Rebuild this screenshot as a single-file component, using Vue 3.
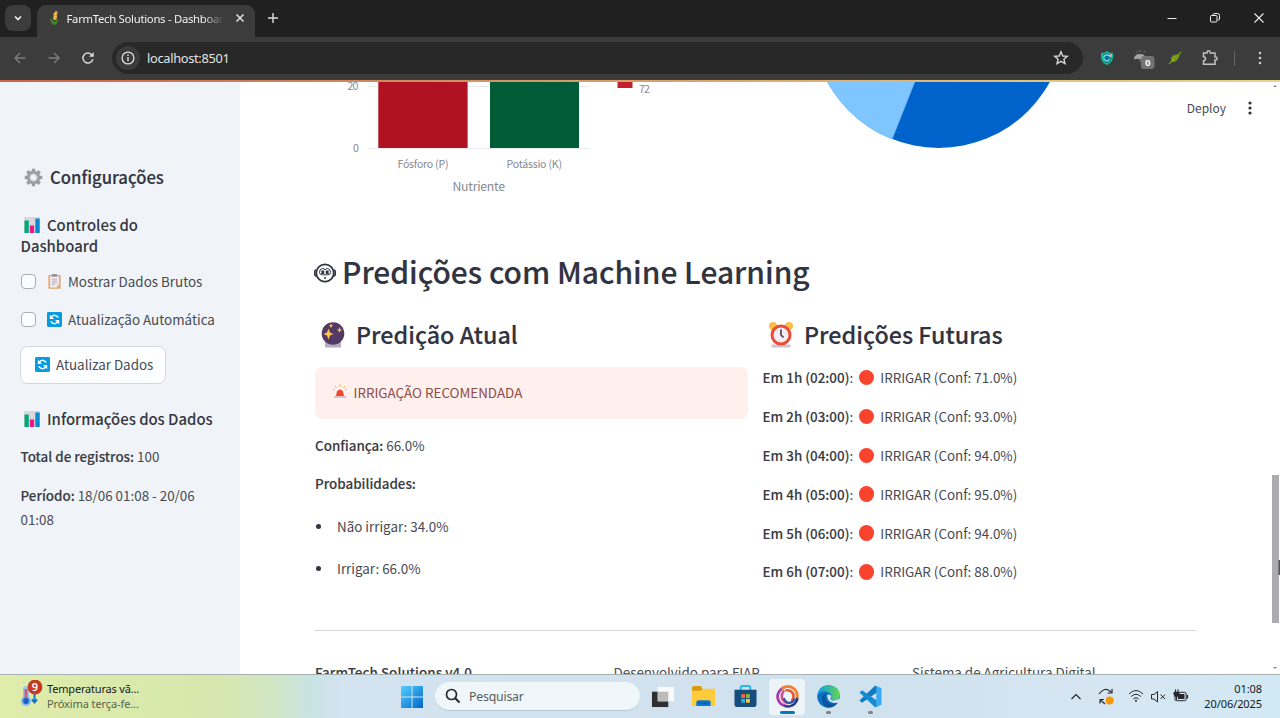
<script setup>
const predictions = [
  ['Em 1h (02:00)', '71.0%'],
  ['Em 2h (03:00)', '93.0%'],
  ['Em 3h (04:00)', '94.0%'],
  ['Em 4h (05:00)', '95.0%'],
  ['Em 5h (06:00)', '94.0%'],
  ['Em 6h (07:00)', '88.0%']
]
</script>

<template>
  <div class="screen">
    <header class="chrome">
      <div class="tabs">
        <div class="tabmenu"><svg width="10" height="10" viewBox="0 0 10 10"><path d="M2 3.5 5 6.5 8 3.5" fill="none" stroke="#eee" stroke-width="1.7" /></svg></div>
        <div class="tab">
          <svg class="fav" width="14" height="16" viewBox="0 0 14 16"><path d="M2.5 8Q2 14 7 15Q10 13 10 9Q8 10 7 12Q5 11 2.5 8Z" fill="#3f8a22" /><path d="M6 10Q4 8 6 6Q4 4 6.5 3Q7 0 9.5 1.5Q10 4 8.5 5Q10 7 8 10Z" fill="#e5a93a" /><path d="M6 4 8 3M6 7 8.5 6" stroke="#f4d27a" /></svg>
          <span class="tabtitle">FarmTech Solutions - Dashboard</span>
          <svg class="x" width="10" height="10" viewBox="0 0 10 10"><path d="M1.5 1.5 8.5 8.5M8.5 1.5 1.5 8.5" stroke="#e4e4e4" stroke-width="1.5" /></svg>
        </div>
        <svg class="plus" width="12" height="12" viewBox="0 0 12 12"><path d="M6 1V11M1 6H11" stroke="#ddd" stroke-width="1.4" /></svg>
        <div class="wincontrols">
          <svg width="10" height="12" viewBox="0 0 10 12"><path d="M.5 6.5H9.5" stroke="#eee" /></svg>
          <svg width="12" height="12" viewBox="0 0 12 12" fill="none" stroke="#eee"><rect x="1.5" y="3.5" width="6.5" height="6.5" rx="1" /><path d="M4 3.5V3Q4 1.5 5.5 1.5H8.5Q10.5 1.5 10.5 3.5V7Q10.5 8 9 8" /></svg>
          <svg width="12" height="12" viewBox="0 0 12 12"><path d="M1.5 1.5 10.5 10.5M10.5 1.5 1.5 10.5" stroke="#eee" stroke-width="1.1" /></svg>
        </div>
      </div>
      <div class="toolbar">
        <svg class="nav1" width="14" height="14" viewBox="0 0 14 14" fill="none" stroke="#7c7c7c" stroke-width="1.4"><path d="M12.5 7H2M7 2 2 7 7 12" /></svg>
        <svg class="nav2" width="14" height="14" viewBox="0 0 14 14" fill="none" stroke="#7c7c7c" stroke-width="1.4"><path d="M1.5 7H12M7 2 12 7 7 12" /></svg>
        <svg class="nav3" width="14" height="14" viewBox="0 0 14 14"><path d="M11.8 8.2A5 5 0 1 1 11 4.1L12 5.3" fill="none" stroke="#d4d4d4" stroke-width="1.5" /><path d="M12.7 1V5.7H8Z" fill="#d4d4d4" /></svg>
        <div class="address">
          <span class="info"><svg width="14" height="14" viewBox="0 0 14 14"><circle cx="7" cy="7" r="5.9" fill="none" stroke="#ddd" stroke-width="1.3" /><path d="M7 6V10.2M7 3.6V5" stroke="#ddd" stroke-width="1.4" /></svg></span>
          <span class="url">localhost:8501</span>
          <svg class="star" width="16" height="16" viewBox="0 0 16 16"><path d="M8 1.8 9.8 6 14.3 6.3 10.9 9.2 12 13.6 8 11.3 4 13.6 5.1 9.2 1.7 6.3 6.2 6Z" fill="none" stroke="#d5d5d5" stroke-width="1.4" /></svg>
        </div>
        <div class="exts">
          <svg width="14" height="16" viewBox="0 0 14 16"><path d="M1 3Q5 3 7 1Q9 3 13 3V8Q12 13 7 15Q2 13 1 8Z" fill="#13b99b" /><path d="M3 5 7 3.5 10 5M11 8Q10 12 7 13Q3 11 3 7" stroke="#0c665f" fill="none" /><path d="M9.5 9.2A3 3 0 1 1 9 5.8" fill="#0870a5" stroke="#77e8ed" stroke-width="1.2" /><circle cx="10.5" cy="5.5" r="1.5" fill="#d5b3a1" /></svg>
          <svg class="ext2" width="22" height="22" viewBox="0 0 22 22"><path d="M1 12.5Q1 7 7 7Q13 7 13 12.5Q10 11 7 12.5Q4 11 1 12.5Z" fill="#a5a5a5" /><path d="M4 5.5 3 4M7 5V3M10.5 5.5 12 4M7 13V15" stroke="#777" /><rect x="8" y="9" width="13.5" height="13" rx="3" fill="#737373" /><text x="14.7" y="19" text-anchor="middle" font-size="9.5" font-weight="700" fill="#fff">0</text></svg>
          <svg width="14" height="14" viewBox="0 0 14 14"><path d="M1 13 13 1" stroke="#6b9c0b" stroke-width="1.3" /><path d="M3 7 5 6 5 4.5 7 5 8 3.5 9.5 5 11 3.5 10.5 6.5 9 7.5 9.5 9 7.5 9 6.5 11 5 10 3 11 4 8.5Z" fill="#86a90c" stroke="#86a90c" stroke-width=".6" /><path d="M5.5 6 8.5 9M7.5 4.5 9.5 7" stroke="#4b7a11" stroke-width=".8" /></svg>
          <svg width="18" height="18" viewBox="0 0 18 18"><path d="M2.5 4H6V3.4A1.6 1.6 0 0 1 9.2 3.4V4H14V8H14.6A1.4 1.4 0 0 1 14.6 11H14V15.3H2.5V11.8A1.9 1.9 0 0 0 2.5 7.8Z" fill="none" stroke="#c1c1c1" stroke-width="1.5" /></svg>
          <i></i>
          <svg width="4" height="16" viewBox="0 0 4 16" fill="#ccc"><circle cx="2" cy="3" r="1.3" /><circle cx="2" cy="8" r="1.3" /><circle cx="2" cy="13" r="1.3" /></svg>
        </div>
      </div>
    </header>

    <div class="page">
      <aside>
        <h2><svg class="e20" viewBox="0 0 20 20"><g stroke="#9b9ba1" stroke-width="3.6"><path d="M10 .8V19.2M.8 10H19.2M3.5 3.5 16.5 16.5M16.5 3.5 3.5 16.5" /></g><circle cx="10" cy="10" r="5.5" fill="#f0f4f9" stroke="#9b9ba1" stroke-width="3" /><circle cx="10" cy="10" r="3.8" fill="#f0f4f9" stroke="#c1c0c7" stroke-width="1.2" /></svg><span>Configurações</span></h2>
        <h3 class="controls"><svg class="e16" viewBox="0 0 16 16"><rect width="16" height="16" rx="1" fill="#ddd6df" /><rect x=".5" y="3.5" width="4.3" height="12.5" fill="#00aa76" /><rect x="5.9" y="8.5" width="4.2" height="7.5" fill="#ec168c" /><rect x="11.3" y="1.5" width="4.4" height="14.5" fill="#0989d0" /></svg><span>Controles do</span><br><span>Dashboard</span></h3>
        <label class="check1"><span class="box"></span><svg class="e16" viewBox="0 0 16 16"><rect x="1.5" y="1" width="13" height="14.8" rx="1" fill="#e6a66d" /><path d="M3.3 2.5H12.7V12L10.5 14.3H3.3Z" fill="#f4eff2" /><path d="M12.7 12H10.5V14.3Z" fill="#b9b0bd" /><rect x="5" y="0" width="6" height="3" rx="1" fill="#99939c" /><path d="M5 5.5H11M5 7.5H11M5 9.5H11M5 11.5H8.5" stroke="#aaa3b0" stroke-width=".9" /></svg><span>Mostrar Dados Brutos</span></label>
        <label class="check2"><span class="box"></span><svg class="e16" viewBox="0 0 16 16"><rect width="16" height="16" rx="1.5" fill="#079ce0" /><path d="M4 6Q8 1 12 6M12 10Q8 15 4 10" fill="none" stroke="#fff" stroke-width="1.7" /><path d="M3 3V7.5H7.5ZM13 13V8.5H8.5Z" fill="#fff" /></svg><span>Atualização Automática</span></label>
        <button><svg class="e16" viewBox="0 0 16 16"><rect width="16" height="16" rx="1.5" fill="#079ce0" /><path d="M4 6Q8 1 12 6M12 10Q8 15 4 10" fill="none" stroke="#fff" stroke-width="1.7" /><path d="M3 3V7.5H7.5ZM13 13V8.5H8.5Z" fill="#fff" /></svg><span>Atualizar Dados</span></button>
        <h3 class="infohead"><svg class="e16" viewBox="0 0 16 16"><rect width="16" height="16" rx="1" fill="#ddd6df" /><rect x=".5" y="3.5" width="4.3" height="12.5" fill="#00aa76" /><rect x="5.9" y="8.5" width="4.2" height="7.5" fill="#ec168c" /><rect x="11.3" y="1.5" width="4.4" height="14.5" fill="#0989d0" /></svg><span>Informações dos Dados</span></h3>
        <p class="total"><b>Total de registros:</b> 100</p>
        <p class="period"><b>Período:</b> 18/06 01:08 - 20/06<br>01:08</p>
      </aside>

      <main>
        <svg class="charts" width="1032" height="120" viewBox="240 82 1032 120">
          <path d="M368 86.5H590M368 148.5H590" stroke="#e9ebef" />
          <rect x="378.3" y="82" width="89.3" height="66" fill="#b01222" />
          <rect x="490" y="82" width="89" height="66" fill="#005c37" />
          <rect x="617.5" y="82" width="15" height="6" fill="#c41f2d" />
          <g fill="#858992" font-size="10.6">
            <text x="347.5" y="90.3" textLength="11">20</text><text x="353" y="152" textLength="6">0</text>
            <text x="397.5" y="168" textLength="51">Fósforo (P)</text><text x="506.5" y="168" textLength="55.5">Potássio (K)</text>
            <text x="639" y="93" textLength="11">72</text>
            <text x="452.5" y="191.3" font-size="12.3" textLength="52.5">Nutriente</text>
          </g>
          <circle cx="938.7" cy="21.5" r="126.5" fill="#0063cc" />
          <path d="M938.7 21.5 892.2 139.1A126.5 126.5 0 0 1 811.9 21.5Z" fill="#7fc5ff" stroke="#7fc5ff" stroke-width=".4" />
        </svg>
        <h1><svg width="22" height="20" viewBox="0 0 22 20" fill="none" stroke="#31333f" stroke-width="1.7"><circle cx="11" cy="10" r="8.7" /><path d="M2 7Q.7 7 .7 10Q.7 13 2 13M20 7Q21.3 7 21.3 10Q21.3 13 20 13" /><path d="M5.5 9.5Q5.5 5.5 8.5 5.5Q10.5 5.5 11 7Q11.5 5.5 13.5 5.5Q16.5 5.5 16.5 9.5Q16.5 11.8 13.5 11.8H8.5Q5.5 11.8 5.5 9.5Z" stroke-width="1" /><path d="M8.8 7.5V11M13.2 7.5V11" stroke-width="2.8" /><path d="M10 15H12" /></svg><span>Predições com Machine Learning</span></h1>
        <div class="columns">
          <section class="current">
            <h2><svg width="26" height="28" viewBox="0 0 26 28"><path d="M5 20H21V26.5H5Z" fill="#b5aebc" /><circle cx="13" cy="12.5" r="11.3" fill="#533a65" /><path d="M8.5 7.5 10 11.5 13.5 13 10 14.5 8.5 18.5 7 14.5 3.5 13 7 11.5ZM19.5 6 20.3 8.2 22.3 9 20.3 9.8 19.5 12 18.7 9.8 16.7 9 18.7 8.2ZM11 2.5 11.8 4 13 4.8 11.8 5.5 11 7 10.2 5.5 9 4.8 10.2 4Z" fill="#ffc34b" /></svg><span>Predição Atual</span></h2>
            <div class="alert"><svg width="14" height="15" viewBox="0 0 14 15"><path d="M2.8 12.5 4 7.5Q7 3.5 10 7.5L11.2 12.5Z" fill="#f54632" /><rect x="1" y="12" width="12" height="2" fill="#d6c4cb" /><path d="M7 3V0M3.5 4 2 2M10.5 4 12 2M2 6 0 5M12 6 14 5" stroke="#f8bd59" stroke-width="1" /></svg><span>IRRIGAÇÃO RECOMENDADA</span></div>
            <p class="conf"><b>Confiança:</b> 66.0%</p>
            <p class="prob"><b>Probabilidades:</b></p>
            <ul><li>Não irrigar: 34.0%</li><li>Irrigar: 66.0%</li></ul>
          </section>
          <section class="future">
            <h2><svg width="26" height="28" viewBox="0 0 26 28"><rect x="3.5" y="23.5" width="19" height="3" rx="1" fill="#cbc5cd" /><circle cx="5" cy="5" r="4" fill="#fac04a" /><circle cx="21" cy="5" r="4" fill="#fac04a" /><circle cx="13" cy="14" r="9" fill="#f2edf3" stroke="#e94c37" stroke-width="3" /><path d="M13 8.5V14L15.5 16.5" fill="none" stroke="#42394a" stroke-width="1.6" /></svg><span>Predições Futuras</span></h2>
            <p v-for="p in predictions" :key="p[0]"><span class="time"><b>{{ p[0] }}</b>:</span><i></i><span class="result">IRRIGAR (Conf: {{ p[1] }})</span></p>
          </section>
        </div>
        <div class="rule"></div>
        <footer><b>FarmTech Solutions v4.0</b><span>Desenvolvido para FIAP</span><span>Sistema de Agricultura Digital</span></footer>
        <div class="deploy">Deploy <svg width="4" height="14" viewBox="0 0 4 14" fill="#31333f"><circle cx="2" cy="2" r="1.6" /><circle cx="2" cy="7" r="1.6" /><circle cx="2" cy="12" r="1.6" /></svg></div>
      </main>
      <div class="scroll"><span class="up"></span><span class="thumb"></span><span class="down"></span></div>
    </div>

    <nav class="taskbar">
      <svg class="weather" width="24" height="28" viewBox="0 0 24 28"><rect x="4" y="6" width="6" height="16" rx="3" fill="#9bc7ef" /><circle cx="7" cy="21" r="5" fill="#84b8ef" /><path d="M7 9V21" stroke="#c46380" stroke-width="3" /><circle cx="7" cy="21" r="3" fill="#1764cd" /><path d="M15.5 14V22M13 19.5 15.5 22.5 18 19.5" stroke="#1874c9" stroke-width="2" fill="none" /><circle cx="16" cy="7" r="7.4" fill="#c53b21" /><text x="16" y="11" text-anchor="middle" fill="#fff" font-size="11" font-weight="600">9</text></svg>
      <div class="news"><span>Temperaturas vã...</span><span>Próxima terça-fe...</span></div>
      <svg class="win" width="22" height="22" viewBox="0 0 22 22"><defs><linearGradient id="win" x1="0" y1="0" x2="1" y2="1"><stop stop-color="#55d0ff" /><stop offset="1" stop-color="#0066c8" /></linearGradient></defs><path d="M0 0H10.5V10.5H0ZM11.5 0H22V10.5H11.5ZM0 11.5H10.5V22H0ZM11.5 11.5H22V22H11.5Z" fill="url(#win)" /></svg>
      <div class="search"><svg width="16" height="16" viewBox="0 0 16 16"><circle cx="6.5" cy="6.5" r="5" fill="none" stroke="#252a30" stroke-width="1.7" /><path d="M10.2 10.2 14.5 14.5" stroke="#252a30" stroke-width="2" /></svg><span>Pesquisar</span></div>
      <div class="apps">
        <div class="app"><svg viewBox="0 0 24 24"><rect x="1" y="7" width="17" height="16" fill="#2e3032" /><rect x="7" y="2" width="17" height="15" fill="#fafafa" /><rect x="7" y="7" width="11" height="10" fill="#bcbcbd" /></svg></div>
        <div class="app"><svg viewBox="0 0 24 24"><path d="M0 3Q0 1 2 1H9L11 4H24V22H0Z" fill="#ffcb3a" /><path d="M0 3Q0 1 2 1H9L11 4 9 6H0Z" fill="#d49b13" /><path d="M4.5 22V18Q4.5 16 7 16H17Q19.5 16 19.5 18V22Z" fill="#0878cd" /><path d="M7 19H17" stroke="#075291" /></svg></div>
        <div class="app"><svg viewBox="0 0 24 24"><path d="M7 6V3Q7 1 9 1H15Q17 1 17 3V6" fill="none" stroke="#28b4ec" stroke-width="2" /><path d="M.5 5H23.5V20Q23.5 23 20 23H4Q.5 23 .5 20Z" fill="#164d7c" /><path d="M7.5 9.5H11.5V13.5H7.5Z" fill="#ef6641" /><path d="M12.5 9.5H16.5V13.5H12.5Z" fill="#84bd35" /><path d="M7.5 14.5H11.5V18.5H7.5Z" fill="#26aee7" /><path d="M12.5 14.5H16.5V18.5H12.5Z" fill="#fdc537" /></svg></div>
        <div class="app active"><svg viewBox="0 0 24 24" fill="none" stroke-linecap="round"><path d="M7.5 3Q1 7 1.8 13.5Q3 20 9.5 21.8" stroke="#a83bad" stroke-width="3" /><path d="M8 6.5Q4.5 11 7 15.5Q9 18.5 12 19" stroke="#d24a86" stroke-width="2.6" /><path d="M7 3Q14-.5 19.5 4.5Q23 8.5 22 13" stroke="#f28132" stroke-width="3" /><path d="M11 5.5Q16.5 5.5 18.2 10Q18.8 13.5 17 16" stroke="#e4572f" stroke-width="2.8" /><path d="M22.3 14.5Q20.5 21 14 22.3Q11.5 22.5 10 22" stroke="#213c80" stroke-width="2.6" /><path d="M19.8 15Q16.5 19.5 12.5 18.5Q9.5 17.5 8.5 14.5" stroke="#3553a5" stroke-width="2.3" /></svg><i></i></div>
        <div class="app"><svg viewBox="0 0 24 24"><defs><linearGradient id="edge" x2="1"><stop stop-color="#079be4" /><stop offset="1" stop-color="#64d653" /></linearGradient></defs><circle cx="12" cy="12" r="11.7" fill="#0a74c3" /><path d="M.3 11Q2 0 13 .3Q24 2 23.7 11Q22.5 17 16 16Q13.5 15.2 15 13Q16 8 10 7Q4 6 .3 11Z" fill="url(#edge)" /><path d="M10.8 10.2Q14 9 15 12Q13 14.5 15 15.8Q19 17 23.3 14L24 18.5 21 18.4Q15 20 12 16Q9.8 13 10.8 10.2Z" fill="#d3e3ef" /><path d="M5 14Q6 9 10 8.5Q7 13 11 17.5Q15 21 21 18.5Q17 24 11 23.5Q5 21 5 14Z" fill="#0c549d" /></svg><i></i></div>
        <div class="app"><svg viewBox="0 0 24 24"><path d="M17 .5 19 2V7.5L3.2 18.5 .5 16.2Z" fill="#1479be" /><path d="M3.2 5.5 19 16.5V22L17 23.5 .5 7.8Z" fill="#168bd2" /><path d="M17 .5 23.5 3.5V20.5L17 23.5Q18 22.5 18 21V3Q18 1.5 17 .5Z" fill="#39aaf0" /></svg><i></i></div>
      </div>
      <svg class="tray" width="124" height="22" viewBox="1068 686 124 22" fill="none" stroke="#24282b" stroke-width="1.2">
        <path d="M1071.5 699 1076 694.5 1080.5 699" /><path d="M1099 694Q1105 686 1111 692M1112 689V693H1107.5M1100 699.5V703.5M1100 699.5H1104M1100 699.5 1105 704" /><circle cx="1109.7" cy="700.5" r="4" fill="#f5990a" stroke="none" />
        <path d="M1129 694Q1136 687 1143 694M1131.2 696.5Q1136 692 1140.8 696.5M1133.5 698.8Q1136 696.5 1138.5 698.8" stroke-width="1" /><circle cx="1136" cy="700.7" r="1" fill="#24282b" stroke="none" /><path d="M1151.5 694.5H1154L1157.5 691.5V702L1154 699H1151.5ZM1160.5 694.5 1165 699M1165 694.5 1160.5 699" stroke-width="1" />
        <rect x="1175" y="692.3" width="11.2" height="8.4" rx="1.5" stroke-width="1" /><rect x="1178" y="694" width="6.5" height="5" fill="#24282b" stroke="none" /><path d="M1187.5 695V698.5M1175.5 689.5V692M1178 689.5V692" stroke-width="1.2" /><path d="M1173.5 692H1179.5V694Q1179 697 1176.5 697Q1174 697 1173.5 694Z" fill="#24282b" stroke="none" /><path d="M1176.5 696V700" />
      </svg>
      <div class="clock"><span>01:08</span><span>20/06/2025</span></div>
    </nav>
    <svg class="cursor" width="3" height="16" viewBox="0 0 3 16"><path d="M2.2 0V15" stroke="#444" stroke-width="1.4" /></svg>
  </div>
</template>

<style>
body { overflow: hidden; }
</style>
<style scoped>
* { box-sizing: border-box; }
.screen { position: relative; width: 1280px; height: 718px; overflow: hidden; background: #fff; color: #484a52; font: 13.4px/24px "Noto Sans CJK SC", "Noto Sans", sans-serif; }
svg { display: block; flex: none; }
h1, h2, h3, p, ul { margin: 0; padding: 0; }
h1, h2, h3, b { font-weight: 500; }
h1, h2 { color: #31333f; -webkit-text-stroke: .15px currentColor; }
p, h1, h2, h3, label, span { white-space: nowrap; }
b { color: #3a3c44; -webkit-text-stroke: .12px currentColor; }
.chrome { height: 82px; background: #3c3c3c; border-bottom: 2px solid #d9ae65; border-image: linear-gradient(90deg, #cc634b, #d09462 38%, #e8d68b) 1; font-family: "Noto Sans", sans-serif; }
.tabs { height: 37px; background: #1f201f; display: flex; align-items: flex-start; }
.tabmenu { width: 26px; height: 26px; margin: 5px 0 0 5px; border-radius: 8px; background: #3c3c3c; display: grid; place-items: center; }
.tab { width: 218px; height: 32px; margin: 5px 0 0 6px; padding: 0 10px 0 11px; border-radius: 9px 9px 0 0; background: #3c3c3c; display: flex; align-items: flex-start; }
.fav { margin-top: 5px; }
.tabtitle { width: 157px; overflow: hidden; margin: 3px 0 0 4.5px; font: 11.3px/22px "Noto Sans"; letter-spacing: -.28px; color: #f1f1f1; mask-image: linear-gradient(90deg, #000 87%, transparent); }
.x { margin: 8px 0 0 auto; }
.plus { margin: 12px 0 0 12px; }
.wincontrols { margin: 12px 15px 0 auto; display: flex; gap: 32px; }
.toolbar { height: 42px; border-radius: 8px 8px 0 0; display: flex; align-items: center; padding-left: 13px; }
.nav2 { margin-left: 20px; }
.nav3 { margin-left: 20px; }
.address { width: 971px; height: 32px; margin-left: 17px; background: #272827; border-radius: 16px; display: flex; align-items: center; }
.info { width: 24px; height: 24px; margin-left: 4px; border-radius: 50%; background: #3b3b3b; display: grid; place-items: center; }
.url { margin-left: 7px; font: 12.8px/24px "Noto Sans"; letter-spacing: -.3px; color: #e5e5e5; }
.star { margin: 0 14px 0 auto; }
.exts { flex: 1; display: flex; align-items: center; padding-left: 17px; }
.ext2 { margin-left: 19px; }
.ext2 + svg { margin-left: 13px; }
.ext2 + svg + svg { margin-left: 19px; }
.exts i { width: 1px; height: 15px; margin-left: 15px; background: #666; }
.exts i + svg { margin-left: 23px; }
.page { height: 592px; display: flex; overflow: hidden; }
aside { width: 240px; background: #f0f4f9; padding: 84px 0 0 20.5px; }
aside h2 { height: 22px; font-size: 16.7px; line-height: 22px; display: flex; align-items: center; }
.e20 { width: 19px; height: 19px; margin: 0 7.5px 0 3px; }
.e16 { width: 15px; height: 15px; }
aside h3 { font-size: 14.9px; line-height: 20.5px; color: #35373f; }
aside h3 svg { display: inline-block; vertical-align: -2px; }
aside h3 .e16 { width: 16px; height: 16px; margin: 0 7px 0 3.5px; }
.controls { margin-top: 27px; }
label { display: flex; align-items: center; height: 24px; }
.box { width: 15px; height: 15px; margin-right: 11.5px; border: 1px solid #a9adb5; border-radius: 4px; background: #fafcff; }
label svg { margin-right: 6px; }
label > span:last-child { margin-top: -1px; }
.check1 { margin-top: 13.5px; }
.check2 { margin-top: 13.5px; }
button { margin: 14.5px 0 0 -.5px; width: 146px; height: 38px; padding: 0 0 1px 14px; display: flex; align-items: center; gap: 6px; border: 1px solid #d3d6da; border-radius: 7.5px; background: #fdfeff; color: inherit; font: inherit; }
.infohead { margin-top: 25px; }
.total { margin-top: 15px; }
.period { margin-top: 14.5px; }
main { position: relative; width: 1032px; }
.charts { height: 120px; }
h1 { display: flex; align-items: center; margin: 50px 0 0 74px; height: 40px; font-size: 29.95px; line-height: 40px; gap: 6px; }
h1 svg { margin-top: 1px; }
h1 span { margin-top: -2px; }
.columns { display: flex; margin-left: 75px; }
.current { width: 433px; margin-right: 15px; }
section h2 { height: 30px; margin: 28px 0 0 5px; display: flex; align-items: center; gap: 10px; font-size: 23.3px; line-height: 30px; }
section h2 span { margin-top: -2px; }
.alert { height: 52px; margin-top: 17px; padding: 0 0 3px 18px; border-radius: 7.5px; background: #ffefed; color: #8b4d4b; display: flex; align-items: center; gap: 6.5px; }
.conf { margin-top: 14px; }
.prob { margin-top: 14px; }
ul { list-style: none; margin-top: 18.5px; }
li { display: flex; align-items: center; height: 24px; margin-bottom: 18px; }
li::before { content: ""; width: 5px; height: 5px; margin: 2px 16.5px 0 .5px; border-radius: 50%; background: #31333f; }
.future p { display: flex; align-items: center; height: 24px; margin-bottom: 14.9px; }
.future h2 + p { margin-top: 15.5px; }
.future .time, .future .result { margin-top: -1px; }
.future i { width: 15.5px; height: 15.5px; margin: 0 6px 0 5.5px; border-radius: 50%; background: #fa432d; }
.time { letter-spacing: .02px; margin-left: -.5px; }
.rule { width: 881px; height: 1px; margin-left: 75px; background: #d5d6d9; position: absolute; top: 548px; }
footer { position: absolute; left: 75px; top: 578px; display: grid; grid-template-columns: 298.5px 298.5px 250px; height: 24px; }
footer b { letter-spacing: .05px; }
.deploy { position: absolute; right: 20px; top: 14px; display: flex; align-items: center; gap: 22px; font-size: 12px; }
.scroll { width: 8px; position: relative; background: #fff; }
.thumb { position: absolute; left: 0; top: 393px; width: 6.5px; height: 148px; background: #acacaf; }
.up, .down { position: absolute; left: 1px; border: 2.5px solid transparent; }
.up { top: 1px; border-bottom-color: #888; }
.down { bottom: 3px; border-top-color: #888; }
.taskbar { position: relative; height: 44px; border-top: 1px solid #a8b3b1; display: flex; align-items: center; background: linear-gradient(90deg, #dfecaa 0, #d6e8ae 220px, #cfe5c5 275px, #c7e3e3 310px, #d3e3ef 340px, #d0e2ee 900px, #d7e6f3 1130px, #d1e9f4); color: #151a1d; font-family: "Noto Sans"; }
.weather { margin: -5px 0 0 19px; }
.news { width: 105px; margin: -2px 0 0 4px; display: flex; flex-direction: column; font-size: 11px; line-height: 15px; letter-spacing: -.18px; }
.news span:last-child { color: #56634f; letter-spacing: -.1px; }
.win { margin-left: 249px; margin-top: 1px; }
.search { width: 205px; height: 29px; margin-left: 12px; padding-left: 10px; border-radius: 15px; background: #f0f7fa; border-bottom: 1px solid #b8c8d0; display: flex; align-items: center; gap: 8px; font-size: 12.3px; letter-spacing: -.2px; color: #565d61; }
.search span { margin-top: 1px; }
.apps { display: flex; margin-left: 4px; }
.app { width: 36px; height: 36px; margin-right: 5.7px; display: grid; place-items: center; position: relative; border-radius: 4px; }
.app svg { width: 23px; height: 23px; }
.active { background: #edf4f8; }
.app i { position: absolute; bottom: 1px; width: 5px; height: 3px; border-radius: 2px; background: #7c858b; }
.active i { width: 15px; background: #0875c5; }
.tray { margin-left: auto; }
.clock { width: 70px; display: flex; flex-direction: column; text-align: right; margin: -2px 18px 0 0; font-size: 11px; line-height: 15px; letter-spacing: -.08px; }
.cursor { position: absolute; left: 1277px; top: 560px; }
</style>
